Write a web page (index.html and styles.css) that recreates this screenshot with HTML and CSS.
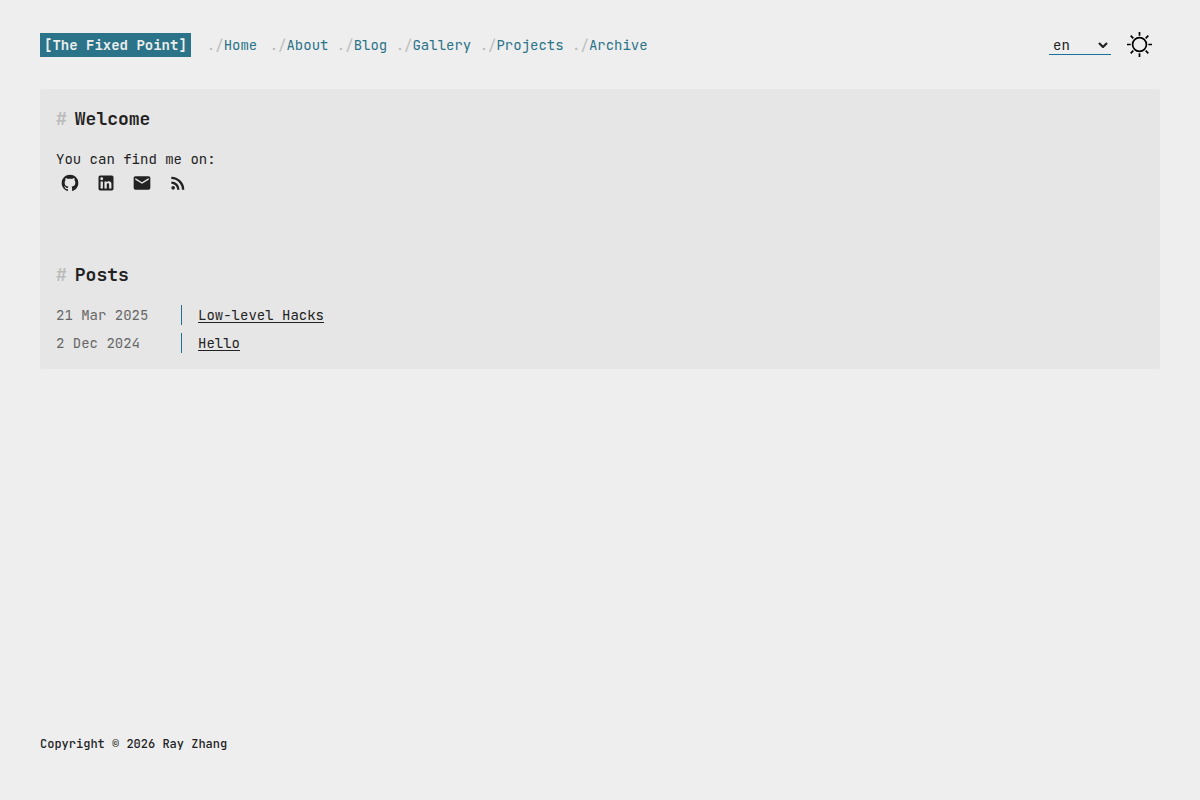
FILE: index.html
```html
<!DOCTYPE html>
<html lang="en">
<head>
<meta charset="utf-8">
<meta name="viewport" content="width=device-width, initial-scale=1">
<title>The Fixed Point</title>
<link rel="stylesheet" href="styles.css">
</head>
<body>
<header class="site-header">
  <a class="brand" href="#">[The Fixed Point]</a>
  <nav class="nav" aria-label="Main">
    <a class="nav-link nav-home" href="#"><span class="prefix">./</span>Home</a>
    <a class="nav-link" href="#"><span class="prefix">./</span>About</a>
    <a class="nav-link" href="#"><span class="prefix">./</span>Blog</a>
    <a class="nav-link" href="#"><span class="prefix">./</span>Gallery</a>
    <a class="nav-link" href="#"><span class="prefix">./</span>Projects</a>
    <a class="nav-link" href="#"><span class="prefix">./</span>Archive</a>
  </nav>
  <div class="tools">
    <span class="lang-box">
      <select class="lang" aria-label="Language"><option>en</option></select>
      <svg class="chevron" viewBox="0 0 10 6" aria-hidden="true"><path d="M1 1l4 4 4-4" fill="none" stroke="currentColor" stroke-width="2.2"/></svg>
    </span>
    <button class="theme" type="button" aria-label="Toggle theme">
      <svg viewBox="0 0 26 26" width="26" height="26" fill="none" stroke="currentColor" stroke-width="1.7"><circle cx="12.5" cy="12.5" r="6.9"/><path d="M12.5 0v3.7M12.5 21.3V25M0 12.5h3.7M21.3 12.5H25M3.7 3.7l2.6 2.6M18.7 18.7l2.6 2.6M3.7 21.3l2.6-2.6M18.7 6.3l2.6-2.6"/></svg>
    </button>
  </div>
</header>
<main class="card">
  <section class="welcome">
    <h1 class="title"><span class="hash">#</span>Welcome</h1>
    <p class="intro">You can find me on:</p>
    <div class="social">
      <a href="#" aria-label="GitHub"><svg viewBox="0 0 24 24"><path d="M12 2A10 10 0 0 0 2 12c0 4.42 2.87 8.17 6.84 9.5.5.08.66-.23.66-.5v-1.69c-2.77.6-3.36-1.34-3.36-1.34-.46-1.16-1.11-1.47-1.11-1.47-.91-.62.07-.6.07-.6 1 .07 1.53 1.03 1.53 1.03.87 1.52 2.34 1.07 2.91.83.09-.65.35-1.09.63-1.34-2.22-.25-4.55-1.11-4.55-4.92 0-1.11.38-2 1.03-2.71-.1-.25-.45-1.29.1-2.64 0 0 .84-.27 2.75 1.02.79-.22 1.65-.33 2.5-.33s1.71.11 2.5.33c1.91-1.29 2.75-1.02 2.75-1.02.55 1.35.2 2.39.1 2.64.65.71 1.03 1.6 1.03 2.71 0 3.82-2.34 4.66-4.57 4.91.36.31.69.92.69 1.85V21c0 .27.16.59.67.5C19.14 20.16 22 16.42 22 12A10 10 0 0 0 12 2z"/></svg></a>
      <a href="#" aria-label="LinkedIn"><svg viewBox="0 0 24 24"><path d="M19 3a2 2 0 0 1 2 2v14a2 2 0 0 1-2 2H5a2 2 0 0 1-2-2V5a2 2 0 0 1 2-2h14m-.5 15.5v-5.3a3.26 3.26 0 0 0-3.26-3.26c-.85 0-1.84.52-2.32 1.3v-1.11h-2.79v8.37h2.79v-4.93c0-.77.62-1.4 1.39-1.4a1.4 1.4 0 0 1 1.4 1.4v4.93h2.79M6.88 8.56a1.68 1.68 0 0 0 1.68-1.68c0-.93-.75-1.69-1.68-1.69a1.69 1.69 0 0 0-1.69 1.69c0 .93.76 1.68 1.69 1.68m1.39 9.94v-8.37H5.5v8.37h2.77z"/></svg></a>
      <a href="#" aria-label="Email"><svg viewBox="0 0 24 24"><path d="M20 8l-8 5-8-5V6l8 5 8-5m0-2H4c-1.11 0-2 .89-2 2v12a2 2 0 0 0 2 2h16a2 2 0 0 0 2-2V6a2 2 0 0 0-2-2z"/></svg></a>
      <a href="#" aria-label="RSS"><svg viewBox="0 0 24 24"><path d="M6.18 15.64a2.18 2.18 0 0 1 2.18 2.18C8.36 19 7.38 20 6.18 20C5 20 4 19 4 17.82a2.18 2.18 0 0 1 2.18-2.18M4 4.44A15.56 15.56 0 0 1 19.56 20h-2.83A12.73 12.73 0 0 0 4 7.27V4.44m0 5.66a9.9 9.9 0 0 1 9.9 9.9h-2.83A7.07 7.07 0 0 0 4 12.93V10.1z"/></svg></a>
    </div>
  </section>
  <section>
    <h2 class="title"><span class="hash">#</span>Posts</h2>
    <ul class="posts">
      <li class="post"><time class="date" datetime="2025-03-21">21 Mar 2025</time><span class="entry"><a class="post-link" href="#">Low-level Hacks</a></span></li>
      <li class="post"><time class="date" datetime="2024-12-02">2 Dec 2024</time><span class="entry"><a class="post-link" href="#">Hello</a></span></li>
    </ul>
  </section>
</main>
<footer class="footer">Copyright © 2026 Ray Zhang</footer>
</body>
</html>
```

FILE: styles.css
```css
* { box-sizing: border-box; }
body {
  margin: 0;
  min-height: 100vh;
  padding: 32px 40px 46px;
  display: flex;
  flex-direction: column;
  background: #eee;
  color: #222;
  font: 14px/20px "JetBrains Mono", "DejaVu Sans Mono", monospace;
}
a { color: inherit; text-decoration: none; }
.site-header {
  display: flex;
  align-items: center;
  min-height: 26px;
  margin-bottom: 31px;
}
.brand {
  padding: 2px 4px;
  background: #2a7389;
  color: #eee;
  font-weight: bold;
}
.nav { display: flex; flex-wrap: wrap; gap: 1ch; margin-left: 16px; }
.nav-link { color: #2a7389; }
.nav-home { padding-right: 4px; }
.prefix { color: #bbb; }
.tools { display: flex; align-items: center; gap: 16px; margin-left: auto; padding-right: 7px; }
.lang-box { display: grid; align-items: center; width: 62px; border-bottom: 1px solid #1b6f9b; }
.lang {
  grid-area: 1 / 1;
  appearance: none;
  width: 100%;
  height: 19px;
  border: 0;
  border-radius: 0;
  padding: 0 4px;
  background: transparent;
  color: #222;
  font: inherit;
}
.chevron { grid-area: 1 / 1; justify-self: end; width: 10px; height: 6px; margin-right: 3px; pointer-events: none; }
.theme { display: block; padding: 0; border: 0; background: none; color: #000; }
.theme svg { display: block; }
.card { padding: 16px; border-radius: 3px; background: #e6e6e6; }
.welcome { margin-bottom: 64px; }
.title { margin: 0 0 16px; font-size: 18px; line-height: 28px; }
.hash { margin-right: 8px; color: #bbb; }
.intro { margin: 0; }
.social { display: flex; gap: 16px; padding: 4px; }
.social a, .social svg { display: block; width: 20px; height: 20px; fill: #222; }
.posts { display: grid; gap: 8px; margin: 0; padding: 0; list-style: none; }
.post { display: flex; }
.date { width: 125px; color: #666; }
.entry { padding-left: 16px; border-left: 1px solid #1f7391; }
.post-link { text-decoration: underline; text-underline-offset: 2px; }
.footer { margin-top: auto; font-size: 12px; font-weight: 500; }
```
